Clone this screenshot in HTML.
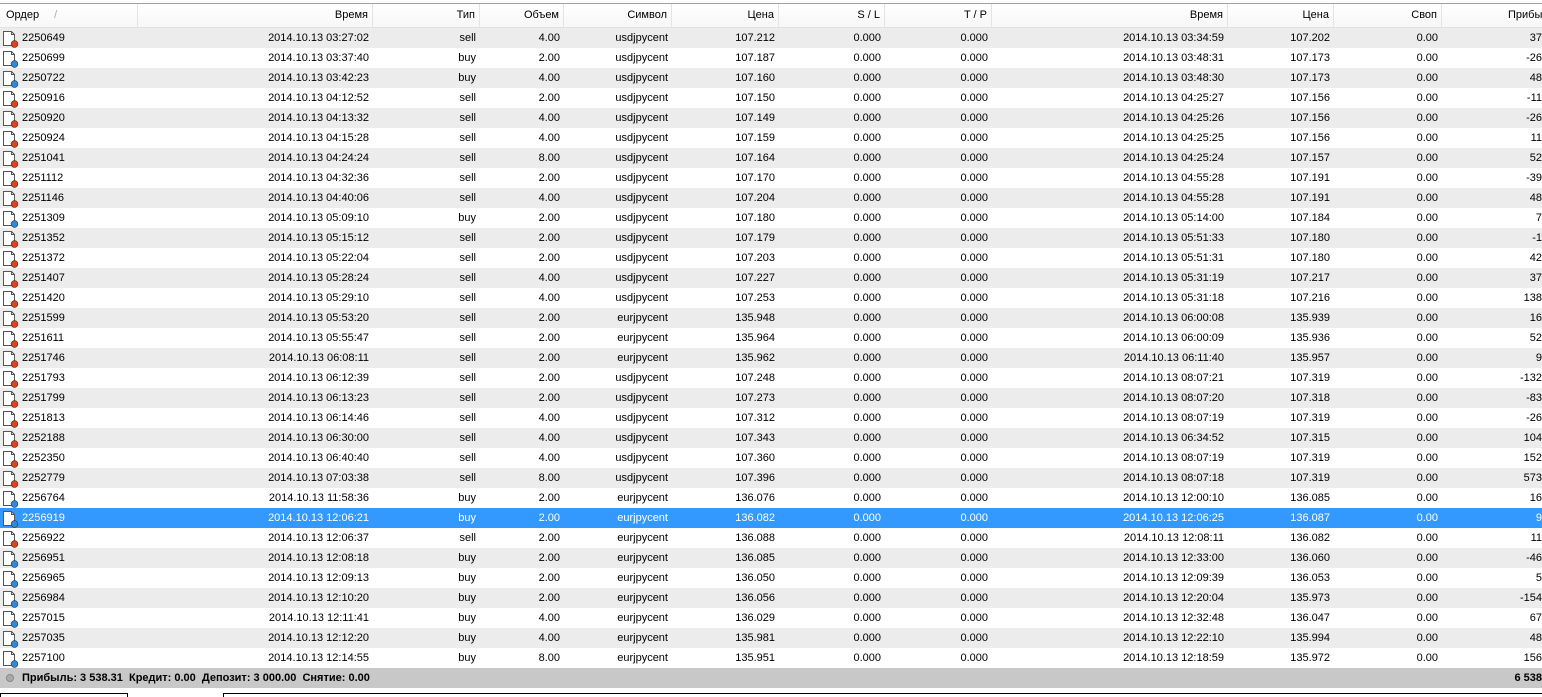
<!DOCTYPE html>
<html><head><meta charset="utf-8"><style>
*{margin:0;padding:0;box-sizing:border-box}
body{width:1542px;height:697px;overflow:hidden;background:#fff;font-family:"Liberation Sans","DejaVu Sans",sans-serif;font-size:11px;color:#000;position:relative}
.top{position:absolute;left:0;top:0;width:1542px;height:4px;background:#fff;border-bottom:1px solid #a0a0a0}
.hdr{position:absolute;left:0;top:4px;height:24px;width:1600px;background:linear-gradient(#fff,#f7f7f7);border-bottom:1px solid #e2e2e2}
.row{position:absolute;left:0;height:20px;width:1542px;overflow:hidden}
.c{position:absolute;top:0;height:100%;line-height:21px;text-align:right;padding-right:4px;white-space:nowrap;overflow:hidden}
.hdr .c{line-height:23px;border-right:1px solid #e4e4e4}
.g{background:#ececec}
.sel{background:#3399ff;color:#fff}
.foot{position:absolute;left:0;top:668px;width:1542px;height:20px;background:#c8c8c8;font-weight:bold;line-height:20px}
.ic{position:absolute;left:2px;top:2px}
</style></head><body>
<div class="top"></div>
<div class="hdr" id="h"></div>
<div id="rows"></div>
<div class="foot"><span style="position:absolute;left:6px;top:6px;width:8px;height:8px;border-radius:50%;background:#aaa;border:1px solid #888"></span><span style="position:absolute;left:22px">Прибыль: 3 538.31&nbsp; Кредит: 0.00&nbsp; Депозит: 3 000.00&nbsp; Снятие: 0.00</span><span style="position:absolute;right:0">6 538</span></div>
<div style="position:absolute;left:0;top:693px;width:128px;height:4px;border:1px solid #000;border-bottom:none"></div>
<div style="position:absolute;left:223px;top:693px;width:1319px;height:4px;border-top:1px solid #000;border-left:1px solid #000"></div>
<script>
var cols=[[0,138],[138,373],[373,480],[480,564],[564,672],[672,779],[779,885],[885,992],[992,1228],[1228,1334],[1334,1442],[1442,1542]];
var hd=["Ордер","Время","Тип","Объем","Символ","Цена","S / L","T / P","Время","Цена","Своп","Прибыль"];
var h=document.getElementById('h'),s='';
for(var i=0;i<cols.length;i++){var w=cols[i][1]-cols[i][0];
if(i==0)s+='<div class="c" style="left:0;width:138px;text-align:left;padding-left:6px">Ордер <span style="color:#aaa;margin-left:12px">/</span></div>';
else if(i==11)s+='<div class="c" style="left:1508px;width:100px;border:none;padding:0;text-align:left">'+hd[i]+'</div>';
else s+='<div class="c" style="left:'+cols[i][0]+'px;width:'+w+'px">'+hd[i]+'</div>';}
h.innerHTML=s;
var D=`2250649 03:27:02 sell 4.00 u 107.212 03:34:59 107.202 37
2250699 03:37:40 buy 2.00 u 107.187 03:48:31 107.173 -26
2250722 03:42:23 buy 4.00 u 107.160 03:48:30 107.173 48
2250916 04:12:52 sell 2.00 u 107.150 04:25:27 107.156 -11
2250920 04:13:32 sell 4.00 u 107.149 04:25:26 107.156 -26
2250924 04:15:28 sell 4.00 u 107.159 04:25:25 107.156 11
2251041 04:24:24 sell 8.00 u 107.164 04:25:24 107.157 52
2251112 04:32:36 sell 2.00 u 107.170 04:55:28 107.191 -39
2251146 04:40:06 sell 4.00 u 107.204 04:55:28 107.191 48
2251309 05:09:10 buy 2.00 u 107.180 05:14:00 107.184 7
2251352 05:15:12 sell 2.00 u 107.179 05:51:33 107.180 -1
2251372 05:22:04 sell 2.00 u 107.203 05:51:31 107.180 42
2251407 05:28:24 sell 4.00 u 107.227 05:31:19 107.217 37
2251420 05:29:10 sell 4.00 u 107.253 05:31:18 107.216 138
2251599 05:53:20 sell 2.00 e 135.948 06:00:08 135.939 16
2251611 05:55:47 sell 2.00 e 135.964 06:00:09 135.936 52
2251746 06:08:11 sell 2.00 e 135.962 06:11:40 135.957 9
2251793 06:12:39 sell 2.00 u 107.248 08:07:21 107.319 -132
2251799 06:13:23 sell 2.00 u 107.273 08:07:20 107.318 -83
2251813 06:14:46 sell 4.00 u 107.312 08:07:19 107.319 -26
2252188 06:30:00 sell 4.00 u 107.343 06:34:52 107.315 104
2252350 06:40:40 sell 4.00 u 107.360 08:07:19 107.319 152
2252779 07:03:38 sell 8.00 u 107.396 08:07:18 107.319 573
2256764 11:58:36 buy 2.00 e 136.076 12:00:10 136.085 16
2256919 12:06:21 buy 2.00 e 136.082 12:06:25 136.087 9
2256922 12:06:37 sell 2.00 e 136.088 12:08:11 136.082 11
2256951 12:08:18 buy 2.00 e 136.085 12:33:00 136.060 -46
2256965 12:09:13 buy 2.00 e 136.050 12:09:39 136.053 5
2256984 12:10:20 buy 2.00 e 136.056 12:20:04 135.973 -154
2257015 12:11:41 buy 4.00 e 136.029 12:32:48 136.047 67
2257035 12:12:20 buy 4.00 e 135.981 12:22:10 135.994 48
2257100 12:14:55 buy 8.00 e 135.951 12:18:59 135.972 156`.split('\n');
var out='';
D.forEach(function(l,k){var p=l.split(' ');var cls=k==24?'sel':(k%2==0?'g':'');
var dot=p[2]=='sell'?'#e0401a':'#2a8ae0';
var v=[p[0],'2014.10.13 '+p[1],p[2],p[3],p[4]=='u'?'usdjpycent':'eurjpycent',p[5],'0.000','0.000','2014.10.13 '+p[6],p[7],'0.00',p[8]];
out+='<div class="row '+cls+'" style="top:'+(28+k*20)+'px">';
out+='<svg class="ic" width="17" height="18" viewBox="0 0 17 18"><path d="M1.5 1.5h8l3 3v11h-11z" fill="#fff" stroke="#555"/><path d="M9.5 1.5v3h3" fill="none" stroke="#555"/><circle cx="12.5" cy="14" r="3.4" fill="'+dot+'" stroke="#333" stroke-width=".6"/></svg>';
for(var i=0;i<12;i++){var w=cols[i][1]-cols[i][0];
if(i==0)out+='<div class="c" style="left:22px;width:110px;text-align:left">'+v[0]+'</div>';
else if(i==11)out+='<div class="c" style="left:1442px;width:100px;padding-right:0">'+v[i]+'</div>';
else out+='<div class="c" style="left:'+cols[i][0]+'px;width:'+w+'px">'+v[i]+'</div>';}
out+='</div>';});
document.getElementById('rows').innerHTML=out;
</script>
</body></html>
